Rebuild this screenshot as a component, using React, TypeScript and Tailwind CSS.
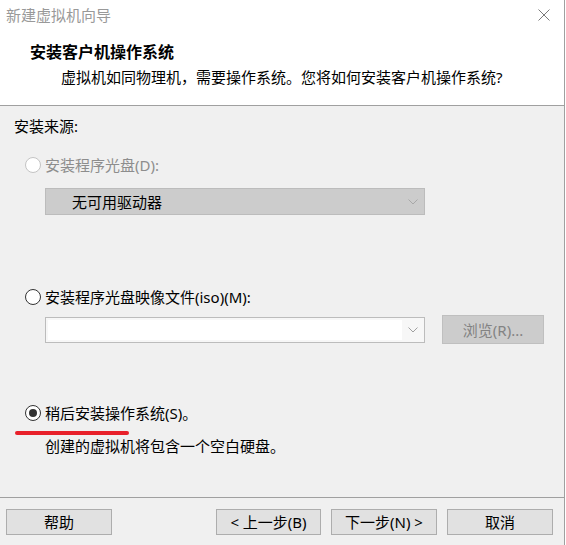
import React from "react";

const font = { fontFamily: '"Noto Sans", "Noto Sans CJK SC", sans-serif' };

function Radio({ checked, disabled }: { checked?: boolean; disabled?: boolean }) {
  return (
    <span
      className={
        "flex h-[16px] w-[16px] shrink-0 items-center justify-center rounded-full border bg-white " +
        (disabled ? "border-[#c4c4c4]" : "border-[#333333]")
      }
    >
      {checked && <span className="h-[8px] w-[8px] rounded-full bg-[#333333]" />}
    </span>
  );
}

function Chevron({ color }: { color: string }) {
  return (
    <svg width="10" height="6" viewBox="0 0 10 6" fill="none">
      <polyline points="0.5,0.5 5,5 9.5,0.5" stroke={color} strokeWidth="1" />
    </svg>
  );
}

function Btn({ label, w }: { label: string; w: string }) {
  return (
    <button
      className={
        "flex h-[26px] items-center justify-center border border-[#adadad] bg-[#e1e1e1] text-[15px] leading-[20px] text-black " +
        w
      }
    >
      {label}
    </button>
  );
}

export default function App() {
  return (
    <div className="h-[545px] w-[566px] bg-white" style={font}>
      <div className="flex h-[545px] w-[565px] flex-col border-r border-[#a0a0a0] bg-[#f0f0f0]">
        {/* header */}
        <div className="flex h-[106px] flex-col border-b border-[#a0a0a0] bg-white">
          <div className="flex h-[30px] items-center justify-between pl-[6px] pr-[14px]">
            <span className="text-[15px] leading-[20px] text-[#999999]">新建虚拟机向导</span>
            <svg width="12" height="12" viewBox="0 0 12 12">
              <path d="M0.5 0.5 L11.5 11.5 M11.5 0.5 L0.5 11.5" stroke="#7a7a7a" strokeWidth="1" />
            </svg>
          </div>
          <div className="pl-[30px] pt-[12px] text-[16px] font-bold leading-[20px] text-black">
            安装客户机操作系统
          </div>
          <div className="mt-[5px] pl-[61px] text-[15px] leading-[20px] text-black">
            虚拟机如同物理机，需要操作系统。您将如何安装客户机操作系统?
          </div>
        </div>

        {/* body */}
        <div className="flex h-[392px] flex-col border-b border-[#a0a0a0] text-[15px] leading-[20px]">
          <div className="pl-[14px] pt-[10px] text-black">安装来源:</div>

          <div className="mt-[19px] flex items-center gap-[4px] pl-[25px] text-[#8d8d8d]">
            <Radio disabled />
            <span>安装程序光盘(D):</span>
          </div>
          <div className="ml-[45px] mt-[13px] flex h-[27px] w-[380px] items-center justify-between border border-[#bcbcbc] bg-[#cccccc] pl-[26px] pr-[6px] text-black">
            <span>无可用驱动器</span>
            <Chevron color="#a8a8a8" />
          </div>

          <div className="mt-[72px] flex items-center gap-[4px] pl-[25px] text-black">
            <Radio />
            <span>安装程序光盘映像文件(iso)(M):</span>
          </div>
          <div className="mt-[8px] flex h-[29px] items-center pl-[45px]">
            <div className="flex h-[26px] w-[380px] items-center border border-[#bcbcbc] bg-[#f7f7f7]">
              <div className="ml-[2px] h-[20px] w-[354px] bg-white" />
              <div className="flex flex-1 items-center justify-center">
                <Chevron color="#a0a0a0" />
              </div>
            </div>
            <div className="ml-[17px] flex h-[29px] w-[102px] items-center justify-center border border-[#bfbfbf] bg-[#cccccc] text-[#838383]">
              浏览(R)...
            </div>
          </div>

          <div className="mt-[59px] flex items-center gap-[4px] pl-[25px] text-black">
            <Radio checked />
            <span>稍后安装操作系统(S)。</span>
          </div>
          <div className="ml-[15px] mt-[8px] h-[4px] w-[114px] rounded-full bg-[#e8202a]" />
          <div className="mt-[1px] pl-[45px] text-black">创建的虚拟机将包含一个空白硬盘。</div>
        </div>

        {/* footer */}
        <div className="flex pl-[6px] pr-[11px] pt-[11px]">
          <Btn label="帮助" w="w-[106px]" />
          <div className="flex-1" />
          <div className="flex gap-[10px]">
            <Btn label="< 上一步(B)" w="w-[105px]" />
            <Btn label="下一步(N) >" w="w-[106px]" />
            <Btn label="取消" w="w-[106px]" />
          </div>
        </div>
      </div>
    </div>
  );
}
